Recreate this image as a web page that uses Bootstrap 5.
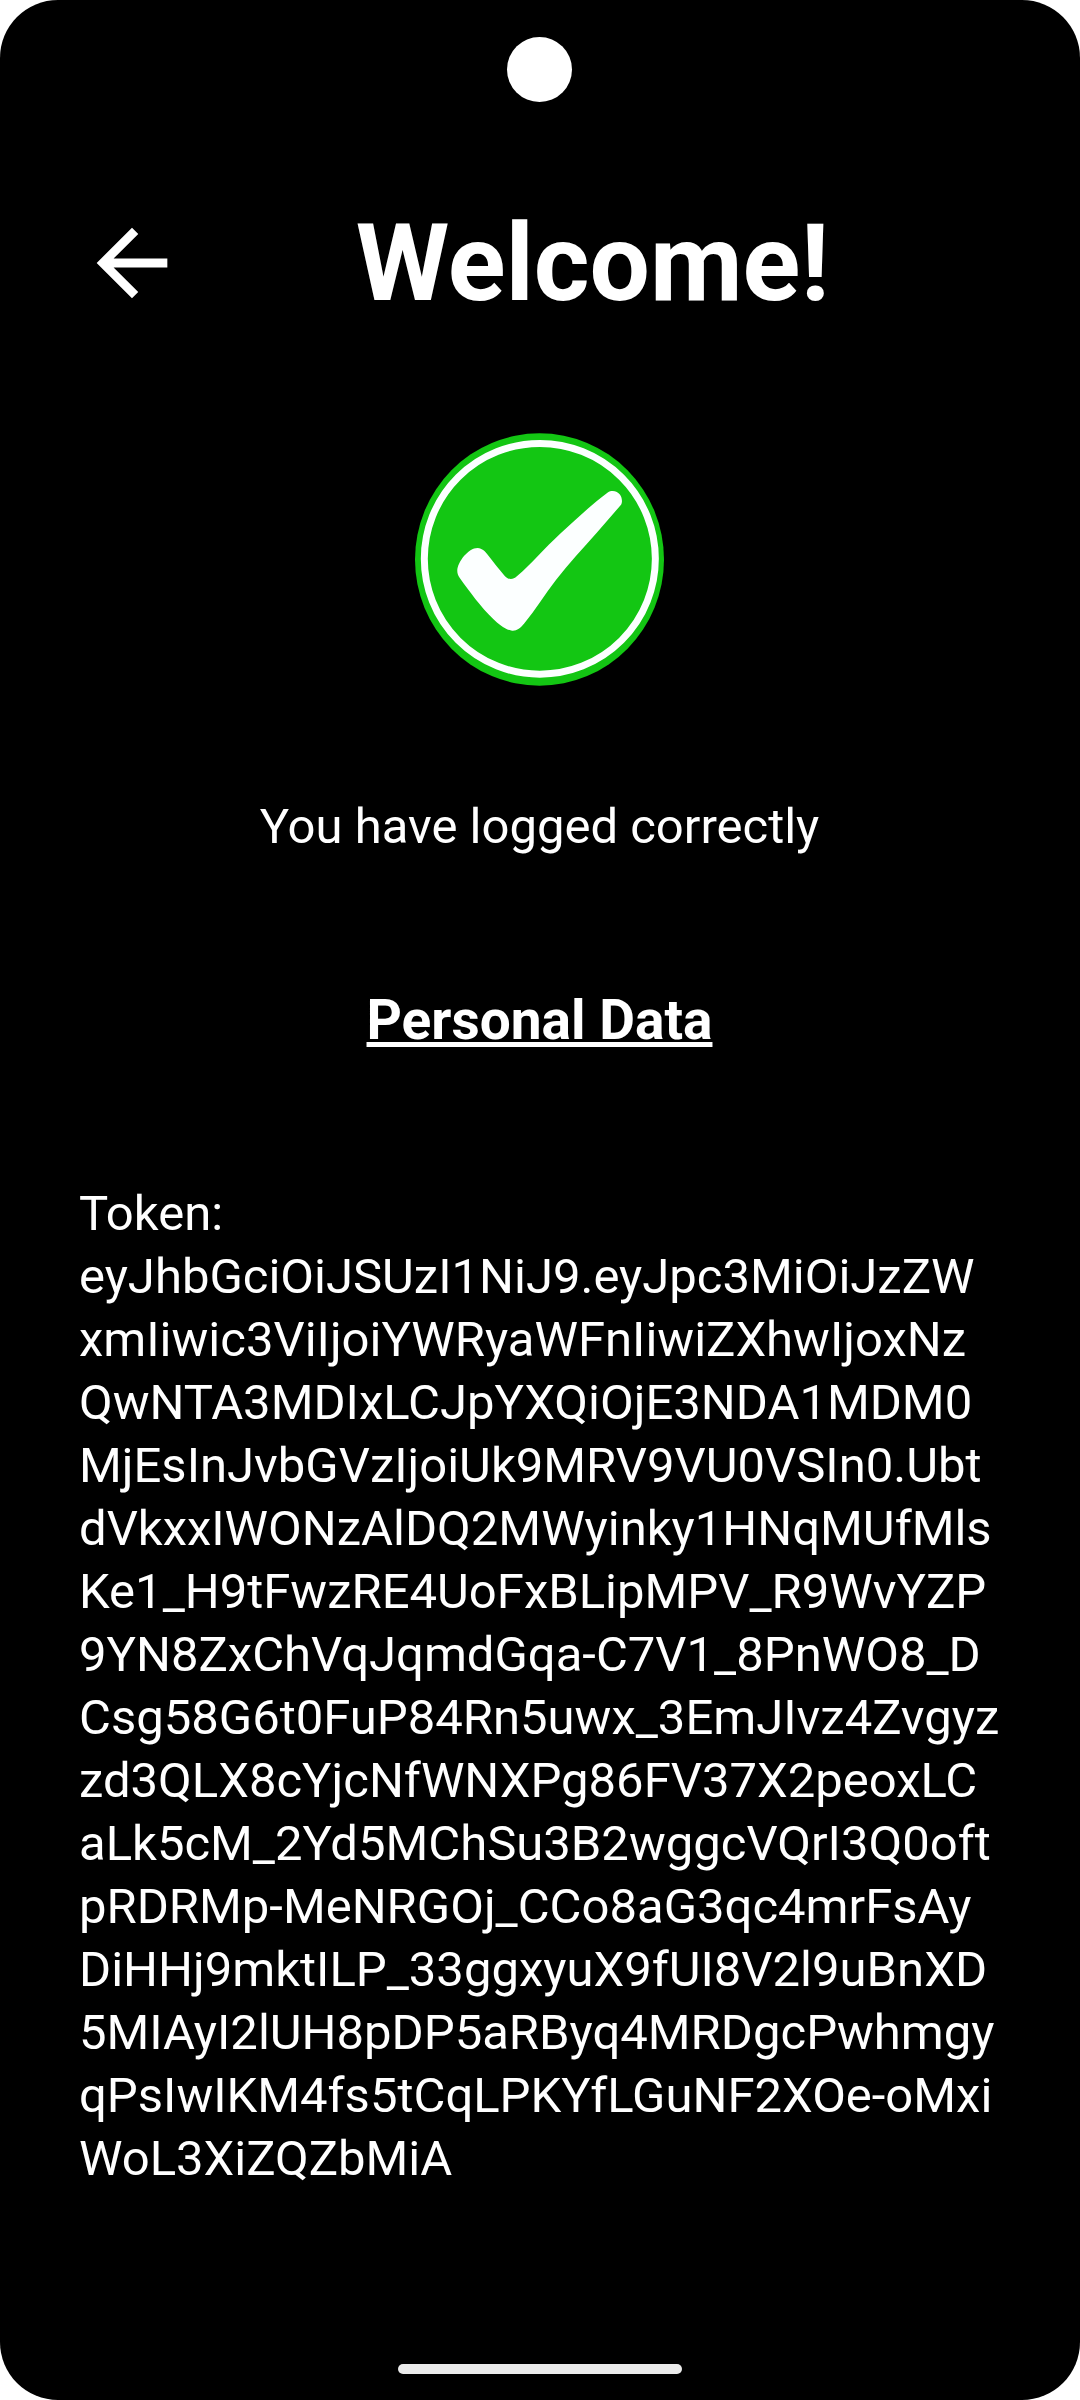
<!DOCTYPE html>
<html lang="en">
<head>
<meta charset="utf-8">
<meta name="viewport" content="width=device-width, initial-scale=1">
<title>Welcome</title>
<link href="https://cdn.jsdelivr.net/npm/bootstrap@5.3.0/dist/css/bootstrap.min.css" rel="stylesheet">
<style>
  body { background: #fff; font-family: Roboto, "Liberation Sans", sans-serif; font-size: 49px; line-height: 63px; }
  .screen { background: #000; color: #fff; border-radius: 58px; padding: 37px 80px 26px 79px; }
  .camera { width: 65px; height: 65px; }
  .topbar { margin-top: 108px; }
  .back-btn svg { width: 106px; height: 106px; }
  .title { font-size: 107px; line-height: 105px; }
  .success-icon { width: 249px; height: 253px; margin-top: 117px; }
  .message { margin-top: 109px; }
  .section-title { font-size: 55px; line-height: 63px; margin-top: 131px; text-underline-offset: 3px; text-decoration-thickness: 3px; }
  .token { margin-top: 130px; }
  .home-bar { width: 284px; height: 10px; background: #ebebeb; }
</style>
</head>
<body>
<main class="screen min-vh-100 d-flex flex-column">
  <div class="camera bg-white rounded-circle mx-auto"></div>
  <header class="topbar d-flex align-items-center">
    <button type="button" class="back-btn btn p-0 border-0 d-flex" aria-label="Back">
      <svg viewBox="0 0 24 24" fill="#fff" aria-hidden="true"><path d="M20 11H7.830l5.590-5.590L12 4l-8 8 8 8 1.410-1.410L7.830 13H20v-2z"/></svg>
    </button>
    <h1 class="title flex-grow-1 text-center fw-bold mb-0">Welcome!</h1>
  </header>
  <svg class="success-icon mx-auto flex-shrink-0" viewBox="74 69 748 759" role="img" aria-label="Success">
    <ellipse cx="448" cy="448.500" rx="374" ry="379" fill="#13c613"/>
    <ellipse cx="449" cy="446.500" rx="347" ry="346.500" fill="none" stroke="#fcffff" stroke-width="21"/>
    <path fill="#fcffff" d="M201 482C202 456 234 414 262 414C276 415 285 424 293 435C310 457 328 480 343 497C354 510 368 510 380 499C425 460 464 414 510 371C558 328 603 284 653 247C665 239 682 242 690 254C697 264 697 278 693 284L620 368C578 416 536 460 498 509C464 553 436 599 402 641C390 656 377 665 363 662C340 656 325 642 309 627C271 590 239 546 208 503C203 496 201 489 201 482Z"/>
  </svg>
  <p class="message text-center mb-0">You have logged correctly</p>
  <h2 class="section-title text-center fw-bold text-decoration-underline mb-0">Personal Data</h2>
  <p class="token text-nowrap mb-0">Token:<br>
    eyJhbGciOiJSUzI1NiJ9.eyJpc3MiOiJzZW<br>
    xmIiwic3ViIjoiYWRyaWFnIiwiZXhwIjoxNz<br>
    QwNTA3MDIxLCJpYXQiOjE3NDA1MDM0<br>
    MjEsInJvbGVzIjoiUk9MRV9VU0VSIn0.Ubt<br>
    dVkxxIWONzAlDQ2MWyinky1HNqMUfMls<br>
    Ke1_H9tFwzRE4UoFxBLipMPV_R9WvYZP<br>
    9YN8ZxChVqJqmdGqa-C7V1_8PnWO8_D<br>
    Csg58G6t0FuP84Rn5uwx_3EmJIvz4Zvgyz<br>
    zd3QLX8cYjcNfWNXPg86FV37X2peoxLC<br>
    aLk5cM_2Yd5MChSu3B2wggcVQrI3Q0oft<br>
    pRDRMp-MeNRGOj_CCo8aG3qc4mrFsAy<br>
    DiHHj9mktILP_33ggxyuX9fUI8V2l9uBnXD<br>
    5MIAyI2lUH8pDP5aRByq4MRDgcPwhmgy<br>
    qPsIwIKM4fs5tCqLPKYfLGuNF2XOe-oMxi<br>
    WoL3XiZQZbMiA</p>
  <div class="home-bar rounded-pill mx-auto mt-auto"></div>
</main>
<script src="https://cdn.jsdelivr.net/npm/bootstrap@5.3.0/dist/js/bootstrap.bundle.min.js"></script>
</body>
</html>
